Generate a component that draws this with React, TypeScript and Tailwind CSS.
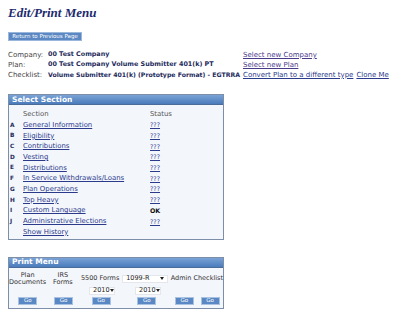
import React from "react";

const sections = [
  { key: "A", name: "General Information", status: "???" },
  { key: "B", name: "Eligibility", status: "???" },
  { key: "C", name: "Contributions", status: "???" },
  { key: "D", name: "Vesting", status: "???" },
  { key: "E", name: "Distributions", status: "???" },
  { key: "F", name: "In Service Withdrawals/Loans", status: "???" },
  { key: "G", name: "Plan Operations", status: "???" },
  { key: "H", name: "Top Heavy", status: "???" },
  { key: "I", name: "Custom Language", status: "OK" },
  { key: "J", name: "Administrative Elections", status: "???" },
];

function BoxHeader({ title }: { title: string }) {
  return (
    <div className="h-[10px] bg-gradient-to-b from-[#7aa3d6] to-[#4a7bbb] border-b border-[#4a6c9a] pl-[3px] flex items-center text-white font-bold text-[7.5px] leading-none">
      {title}
    </div>
  );
}

function GoButton() {
  return (
    <button className="w-[19px] h-[8px] bg-[#5a88c4] border border-[#a9c2e2] text-white text-[5.5px] leading-none flex items-center justify-center">
      Go
    </button>
  );
}

function FakeSelect({ value, width }: { value: string; width: string }) {
  return (
    <div className={`${width} h-[8px] bg-white border border-[#e3e7ec] flex items-center justify-between pl-[3px] pr-[3px] text-[6.5px] leading-none text-[#222]`}>
      <span>{value}</span>
      <span className="w-0 h-0 border-l-[2px] border-r-[2px] border-t-[3px] border-l-transparent border-r-transparent border-t-[#222]" />
    </div>
  );
}

export default function App() {
  return (
    <div className="w-[400px] h-[315px] bg-white pl-2 pt-[5px] font-['Verdana','DejaVu_Sans',sans-serif] text-[#333]">
      <h1 className="font-['Liberation_Serif',serif] italic font-bold text-[13px] leading-[16px] text-[#1c2a6e]">
        Edit/Print Menu
      </h1>

      <button className="mt-[11px] w-[74px] h-[9px] bg-[#5b87c2] border border-[#9bb6db] text-white text-[5.5px] leading-none flex items-center justify-center">
        Return to Previous Page
      </button>

      {/* plan info */}
      <div className="mt-[9px] text-[7px] whitespace-nowrap">
        <div className="h-[10px] flex items-center">
          <span className="w-[40px] text-[#444]">Company:</span>
          <span className="w-[195px] font-bold text-[6.4px] text-[#1d2b5c]">00 Test Company</span>
          <a className="underline text-[#4a3a8a]">Select new Company</a>
        </div>
        <div className="h-[10px] flex items-center">
          <span className="w-[40px] text-[#444]">Plan:</span>
          <span className="w-[195px] font-bold text-[6.4px] text-[#1d2b5c]">00 Test Company Volume Submitter 401(k) PT</span>
          <a className="underline text-[#4a3a8a]">Select new Plan</a>
        </div>
        <div className="h-[10px] flex items-center">
          <span className="w-[40px] text-[#444]">Checklist:</span>
          <span className="w-[195px] font-bold text-[6.2px] text-[#1d2b5c]">Volume Submitter 401(k) (Prototype Format) - EGTRRA</span>
          <a className="underline text-[#2c3a8c]">Convert Plan to a different type</a>
          <a className="underline text-[#2c3a8c] ml-[3px]">Clone Me</a>
        </div>
      </div>

      {/* select section */}
      <div className="mt-[14px] w-[216px] border border-[#7c8ea8] bg-[#f3f6fb]">
        <BoxHeader title="Select Section" />
        <div className="pt-[4px] pb-[1px] text-[6.9px] whitespace-nowrap">
          <div className="h-[10.7px] flex items-center text-[#555]">
            <span className="w-[14px]" />
            <span className="w-[127px]">Section</span>
            <span>Status</span>
          </div>
          {sections.map((s) => (
            <div key={s.key} className="h-[10.7px] flex items-center">
              <span className="w-[14px] pl-[1px] font-bold text-[5.8px] text-[#1d2b5c]">{s.key}</span>
              <a className="w-[127px] underline text-[#2c3a8c]">{s.name}</a>
              {s.status === "OK" ? (
                <span className="font-bold text-[6.3px] text-[#111]">OK</span>
              ) : (
                <a className="underline text-[#2c3a8c] text-[6.3px]">{s.status}</a>
              )}
            </div>
          ))}
          <div className="h-[11px] flex items-center">
            <span className="w-[14px]" />
            <a className="underline text-[#2c3a8c]">Show History</a>
          </div>
        </div>
      </div>

      {/* print menu */}
      <div className="mt-[17px] w-[216px] border border-[#7c8ea8] bg-[#f3f6fb] text-[6.5px] text-[#333] whitespace-nowrap">
        <BoxHeader title="Print Menu" />
        <div className="pt-[4px] pb-[2px]">
          <div className="h-[14px] flex items-center">
            <div className="w-[38px] text-center leading-[7px]">Plan<br />Documents</div>
            <div className="w-[34px] text-center leading-[7px]">IRS<br />Forms</div>
            <div className="w-[42px] text-center">5500 Forms</div>
            <div className="w-[50px] flex justify-center"><FakeSelect value="1099-R" width="w-[46px]" /></div>
            <div className="pl-[1px]">Admin Checklist</div>
          </div>
          <div className="h-[10px] flex items-center">
            <div className="w-[72px]" />
            <div className="w-[42px] flex justify-center"><FakeSelect value="2010" width="w-[26px]" /></div>
            <div className="w-[50px] flex justify-center"><FakeSelect value="2010" width="w-[26px]" /></div>
          </div>
          <div className="h-[10px] flex items-center">
            <div className="w-[38px] flex justify-center"><GoButton /></div>
            <div className="w-[34px] flex justify-center"><GoButton /></div>
            <div className="w-[42px] flex justify-center"><GoButton /></div>
            <div className="w-[50px] flex justify-center"><GoButton /></div>
            <div className="w-[26px] flex justify-center"><GoButton /></div>
            <div className="w-[26px] flex justify-center"><GoButton /></div>
          </div>
        </div>
      </div>
    </div>
  );
}
